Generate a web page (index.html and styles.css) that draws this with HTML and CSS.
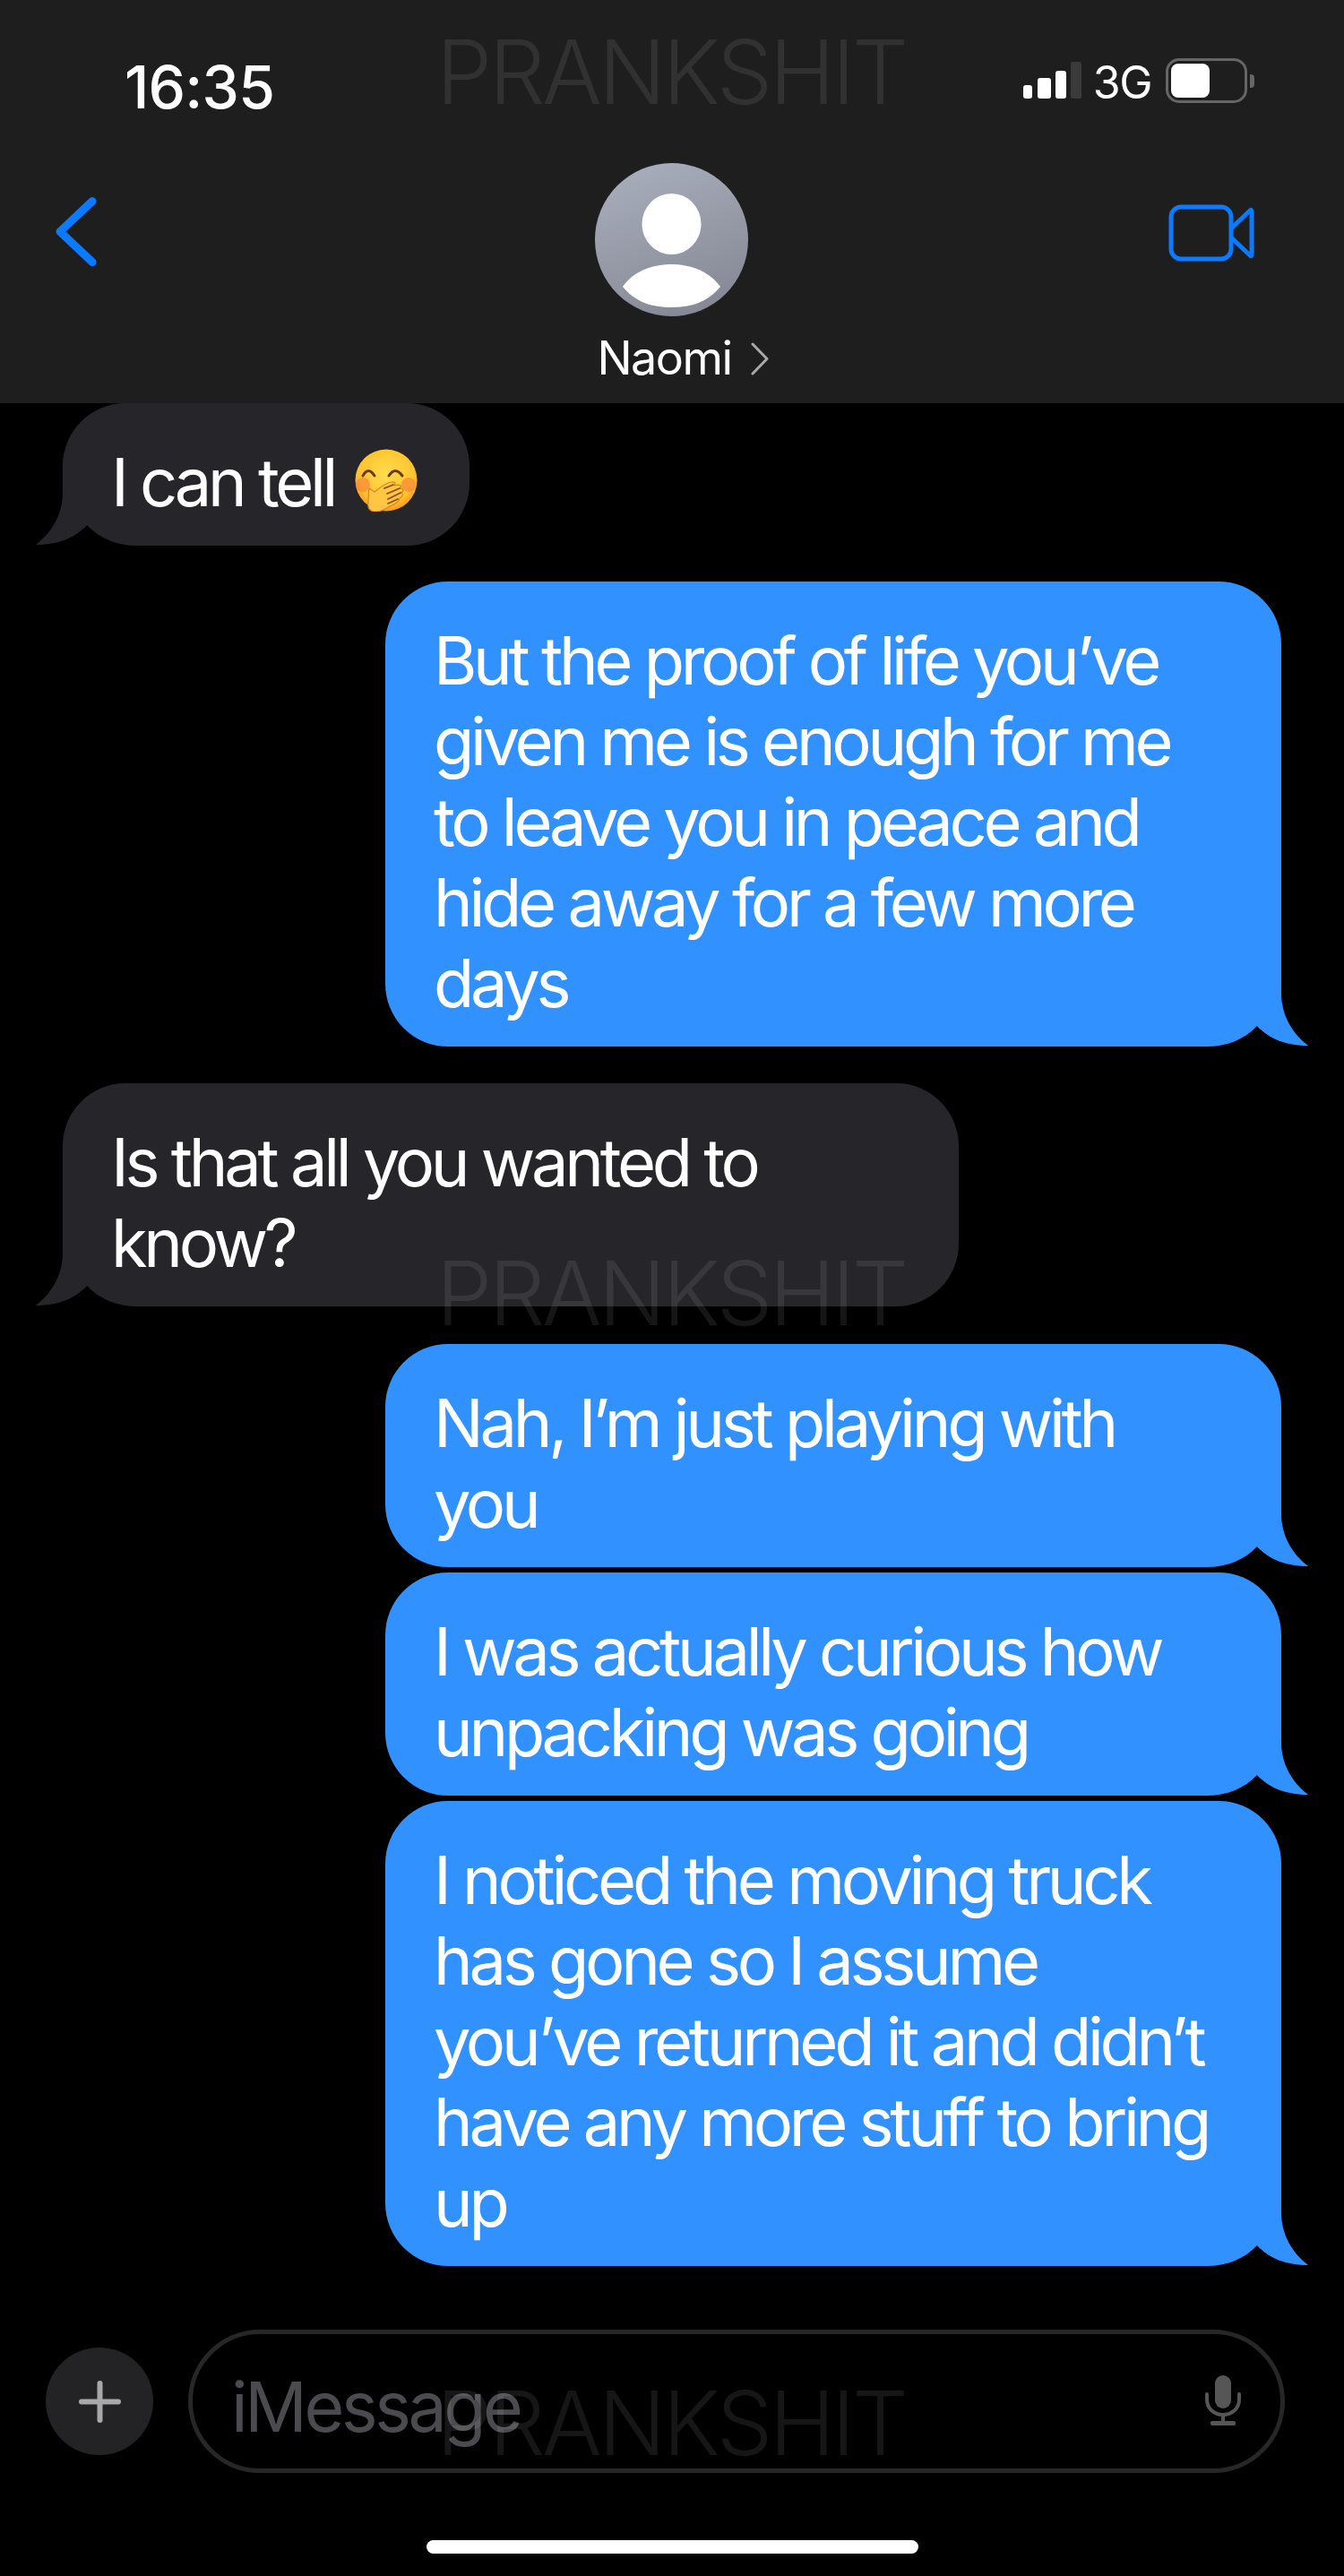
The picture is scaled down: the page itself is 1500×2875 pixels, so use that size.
FILE: index.html
```html
<!DOCTYPE html>
<html lang="en">
<head>
<meta charset="utf-8">
<title>Naomi</title>
<link rel="stylesheet" href="styles.css">
</head>
<body>
<div class="phone">
  <header class="header">
    <div class="status">
      <span class="time">16:35</span>
      <div class="status-right">
        <svg class="signal" viewBox="0 0 65 41" width="65" height="41">
          <rect x="0" y="26" width="10" height="15" rx="3" fill="#fff"/>
          <rect x="16" y="18" width="15" height="23" rx="3" fill="#fff"/>
          <rect x="36" y="10" width="12" height="31" rx="3" fill="#fff"/>
          <rect x="53" y="0" width="12" height="41" rx="2" fill="#3a3a3a"/>
        </svg>
        <span class="network">3G</span>
        <div class="battery"><div class="battery-fill"></div></div>
        <div class="battery-nub"></div>
      </div>
    </div>
    <nav class="nav">
      <svg class="back" viewBox="0 0 46 77" width="46" height="77">
        <path d="M41 4.500 L5 38.500 L41 72.500" fill="none" stroke="#0a7aff" stroke-width="9" stroke-linecap="round" stroke-linejoin="round"/>
      </svg>
      <div class="contact">
        <svg class="avatar" viewBox="0 0 171 171" width="171" height="171">
          <defs>
            <linearGradient id="av" x1="0.3" y1="0" x2="0.7" y2="1">
              <stop offset="0" stop-color="#a8adbb"/>
              <stop offset="1" stop-color="#858894"/>
            </linearGradient>
          </defs>
          <circle cx="85.500" cy="85.500" r="85.500" fill="url(#av)"/>
          <ellipse cx="85.500" cy="68" rx="33" ry="34" fill="#fff"/>
          <path d="M31 138 C42 122 62 113 85.500 113 C109 113 129 122 140 138 C126 155 108 161 85.500 161 C63 161 45 155 31 138 Z" fill="#fff"/>
        </svg>
        <div class="name-row">
          <span class="name">Naomi</span>
          <svg class="name-chevron" viewBox="0 0 20 37" width="20" height="37">
            <path d="M2 2 L18 18.500 L2 35" fill="none" stroke="#a9a9a9" stroke-width="3" stroke-linecap="round" stroke-linejoin="round"/>
          </svg>
        </div>
      </div>
      <svg class="video" viewBox="0 0 96 64" width="96" height="64">
        <rect x="3" y="3" width="67" height="58" rx="11" fill="none" stroke="#0a7aff" stroke-width="5"/>
        <path d="M70 27 L91 7 Q93 5 93 9 L93 55 Q93 59 91 57 L70 37" fill="none" stroke="#0a7aff" stroke-width="5" stroke-linejoin="round"/>
      </svg>
    </nav>
  </header>

  <main class="chat">
    <div class="bubble in">
      I can tell
      <svg class="emoji" viewBox="0 0 70 70" width="70" height="70">
        <defs>
          <radialGradient id="face" cx="0.5" cy="0.4" r="0.62">
            <stop offset="0" stop-color="#ffdc4e"/>
            <stop offset="0.72" stop-color="#ffc42f"/>
            <stop offset="1" stop-color="#f7941d"/>
          </radialGradient>
        </defs>
        <circle cx="35" cy="35" r="34.500" fill="url(#face)"/>
        <ellipse cx="9" cy="40" rx="8" ry="8" fill="#f97a3c" opacity="0.6"/>
        <ellipse cx="60" cy="40" rx="8" ry="8" fill="#f97a3c" opacity="0.6"/>
        <path d="M9 30 Q15 19 22 30" fill="none" stroke="#6d3a10" stroke-width="3" stroke-linecap="round"/>
        <path d="M38 30 Q45 19 53 30" fill="none" stroke="#6d3a10" stroke-width="3" stroke-linecap="round"/>
        <path d="M16 44 L22 48 C28 43 34 38 41 37 C45 36 46 39 44 41 C50 39 53 41 51 44 C54 44 55 47 52 49 C54 50 54 53 50 55 C50 59 44 62 39 64 C33 68 26 71 21 70 C17 69 14 66 15 60 C15 54 15 49 16 44 Z" fill="#ffc544" stroke="#d9861a" stroke-width="1.200"/>
        <path d="M33 44 L43 40 M36 50 L50 44 M37 56 L51 49 M37 61 L48 56" stroke="#8a4b10" stroke-width="1.800" stroke-linecap="round"/>
      </svg>
      <svg class="tail tail-left" viewBox="0 0 113 60" width="113" height="60">
        <path class="notch" d="M0 60 C22 60 42 52 56 37 C72 53 90 59 113 59 L113 60 Z"/>
        <path class="tail-in" d="M83 0 C83 25 95 45 113 59 C90 59 72 53 56 37 C42 30 30 10 40 0 Z"/>
      </svg>
    </div>

    <div class="bubble out wide gap-a">
      But the proof of life you’ve<br>given me is enough for me<br>to leave you in peace and<br>hide away for a few more<br>days
      <svg class="tail tail-right" viewBox="0 0 113 60" width="113" height="60">
        <path class="notch" d="M0 60 C22 60 42 52 56 37 C72 53 90 59 113 59 L113 60 Z"/>
        <path class="tail-out" d="M83 0 C83 25 95 45 113 59 C90 59 72 53 56 37 C42 30 30 10 40 0 Z"/>
      </svg>
    </div>

    <div class="bubble in wide gap-d">
      Is that all you wanted to<br>know?
      <svg class="tail tail-left" viewBox="0 0 113 60" width="113" height="60">
        <path class="notch" d="M0 60 C22 60 42 52 56 37 C72 53 90 59 113 59 L113 60 Z"/>
        <path class="tail-in" d="M83 0 C83 25 95 45 113 59 C90 59 72 53 56 37 C42 30 30 10 40 0 Z"/>
      </svg>
    </div>

    <div class="bubble out wide gap-b">
      Nah, I’m just playing with<br>you
      <svg class="tail tail-right" viewBox="0 0 113 60" width="113" height="60">
        <path class="notch" d="M0 60 C22 60 42 52 56 37 C72 53 90 59 113 59 L113 60 Z"/>
        <path class="tail-out" d="M83 0 C83 25 95 45 113 59 C90 59 72 53 56 37 C42 30 30 10 40 0 Z"/>
      </svg>
    </div>

    <div class="bubble out wide gap-c">
      I was actually curious how<br>unpacking was going
      <svg class="tail tail-right" viewBox="0 0 113 60" width="113" height="60">
        <path class="notch" d="M0 60 C22 60 42 52 56 37 C72 53 90 59 113 59 L113 60 Z"/>
        <path class="tail-out" d="M83 0 C83 25 95 45 113 59 C90 59 72 53 56 37 C42 30 30 10 40 0 Z"/>
      </svg>
    </div>

    <div class="bubble out wide gap-c">
      I noticed the moving truck<br>has gone so I assume<br>you’ve returned it and didn’t<br>have any more stuff to bring<br>up
      <svg class="tail tail-right" viewBox="0 0 113 60" width="113" height="60">
        <path class="notch" d="M0 60 C22 60 42 52 56 37 C72 53 90 59 113 59 L113 60 Z"/>
        <path class="tail-out" d="M83 0 C83 25 95 45 113 59 C90 59 72 53 56 37 C42 30 30 10 40 0 Z"/>
      </svg>
    </div>
  </main>

  <footer class="composer">
    <div class="plus">
      <svg viewBox="0 0 47 47" width="47" height="47">
        <path d="M23.500 3 V44 M3 23.500 H44" stroke="#a8a8a8" stroke-width="6" stroke-linecap="round"/>
      </svg>
    </div>
    <div class="input">
      <span class="placeholder">iMessage</span>
      <svg class="mic" viewBox="0 0 40 56" width="40" height="56">
        <rect x="11" y="0" width="18" height="37" rx="9" fill="#565656"/>
        <path d="M2 21 V27 C2 37 10 44 20 44 C30 44 38 37 38 27 V21" fill="none" stroke="#565656" stroke-width="4" stroke-linecap="round"/>
        <path d="M20 44 V52" stroke="#565656" stroke-width="4"/>
        <rect x="6" y="51" width="28" height="5" rx="2" fill="#565656"/>
      </svg>
    </div>
  </footer>
  <div class="home-bar"></div>

  <div class="mark mark-top">PRANKSHIT</div>
  <div class="mark mark-mid">PRANKSHIT</div>
  <div class="mark mark-bottom">PRANKSHIT</div>
</div>
</body>
</html>
```

FILE: styles.css
```css
* { box-sizing: border-box; }

html, body {
  margin: 0;
  padding: 0;
  background: #000;
}

.phone {
  position: relative;
  width: 1500px;
  height: 2875px;
  overflow: hidden;
  background: #000;
  color: #fff;
  font-family: Inter, "Liberation Sans", sans-serif;
}

/* Header */
.header {
  height: 450px;
  padding-top: 60px;
  background: #1e1e1e;
}

.status {
  display: flex;
  justify-content: space-between;
  height: 70px;
  padding: 0 100px 0 139px;
}

.time {
  font-size: 66px;
  line-height: 75px;
  font-weight: 500;
  letter-spacing: -0.800px;
}

.status-right {
  display: flex;
  align-items: flex-start;
  padding-top: 5px;
}

.signal { margin-top: 4px; }

.network {
  margin-left: 13px;
  font-size: 50px;
  line-height: 54px;
  letter-spacing: -1.500px;
}

.battery {
  width: 91px;
  height: 50px;
  margin-left: 16px;
  padding: 3px;
  border: 3px solid #666;
  border-radius: 15px;
}

.battery-fill {
  width: 43px;
  height: 38px;
  border-radius: 8px;
  background: #fff;
}

.battery-nub {
  width: 5px;
  height: 15px;
  margin: 18px 0 0 3px;
  border-radius: 0 4px 4px 0;
  background: #666;
}

.nav {
  display: grid;
  grid-template-columns: 1fr auto 1fr;
  margin-top: 52px;
  padding: 0 62px;
}

.back { margin-top: 38px; }

.contact {
  display: flex;
  flex-direction: column;
  align-items: center;
}

.name-row {
  display: flex;
  align-items: center;
  gap: 21px;
  margin-top: 16px;
  padding-left: 24px;
}

.name {
  font-size: 52px;
  line-height: 62px;
  letter-spacing: -1.500px;
}

.name-chevron { margin-top: 0; }

.video {
  justify-self: end;
  margin: 46px 38px 0 0;
}

/* Messages */
.chat {
  display: flex;
  flex-direction: column;
  align-items: flex-start;
  padding: 0 70px;
  font-size: 74px;
  line-height: 90px;
  letter-spacing: -4.300px;
}

.bubble {
  position: relative;
  padding: 43px 58px 26px 54px;
  border-radius: 70px;
  white-space: nowrap;
}

.wide { width: 1000px; }

.in { background: #26252a; border-bottom-left-radius: 0; }

.out {
  align-self: flex-end;
  background: #3192ff;
  border-bottom-right-radius: 0;
}

.gap-a { margin-top: 40px; }
.gap-d { margin-top: 41px; }
.gap-b { margin-top: 42px; }
.gap-c { margin-top: 6px; }

.tail {
  position: absolute;
  bottom: 0;
}

.tail-right { right: -30px; }
.tail-left { left: -30px; transform: scaleX(-1); }

.notch { fill: #000; }
.tail-in { fill: #26252a; }
.tail-out { fill: #3192ff; }

.emoji {
  margin-left: 6px;
  vertical-align: -6px;
}

/* Composer */
.composer {
  display: flex;
  align-items: center;
  gap: 39px;
  margin-top: 71px;
  padding-left: 51px;
}

.plus {
  display: flex;
  align-items: center;
  justify-content: center;
  width: 120px;
  height: 120px;
  border-radius: 50%;
  background: #232224;
}

.input {
  display: flex;
  align-items: center;
  justify-content: space-between;
  width: 1224px;
  height: 160px;
  padding: 0 44px 0 43px;
  border: 5px solid #272727;
  border-radius: 80px;
}

.placeholder {
  margin-top: 12px;
  font-size: 77px;
  line-height: 90px;
  letter-spacing: -3.400px;
  color: #4b4b4f;
}

.mic { margin-top: -2px; }

.home-bar {
  width: 549px;
  height: 15px;
  margin: 75px 0 0 476px;
  border-radius: 8px;
  background: #fff;
}

/* Watermark */
.mark {
  position: absolute;
  left: 487px;
  font-size: 99px;
  line-height: 100px;
  font-weight: 300;
  letter-spacing: -3.500px;
  color: rgba(255, 255, 255, 0.085);
  pointer-events: none;
}

.mark-top { top: 30px; }
.mark-mid { top: 1393px; }
.mark-bottom { top: 2654px; }
```
